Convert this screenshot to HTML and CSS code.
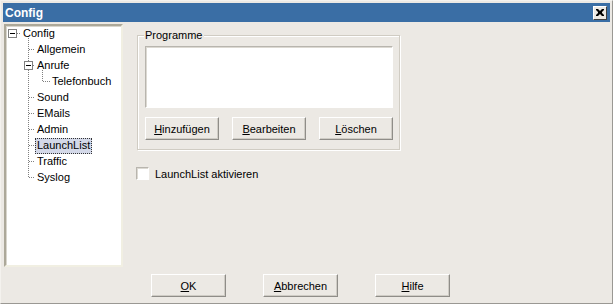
FILE: index.html
```html
<!DOCTYPE html>
<html>
<head>
<meta charset="utf-8">
<link rel="stylesheet" href="styles.css">
</head>
<body>
<div class="window">
  <div class="titlebar">
    <span class="title">Config</span>
    <span class="close"><svg width="8" height="7" viewBox="0 0 8 7"><path d="M0 0h2l2 2 2-2h2v1l-2 2v1l2 2v1h-2l-2-2-2 2h-2v-1l2-2v-1l-2-2z" fill="#000"/></svg></span>
  </div>
  <div class="main">
    <div class="tree">
      <svg class="treelines" width="115" height="160" viewBox="0 0 115 160">
        <g stroke="#808080" stroke-width="1" stroke-dasharray="1 1" fill="none">
          <path d="M11 7.5H15"/>
          <path d="M22.5 12V152"/>
          <path d="M23 23.5H29M27 39.5H29M23 71.5H29M23 87.5H29M23 103.5H29M23 119.5H29M23 135.5H29M23 151.5H29"/>
          <path d="M36.5 44V56"/>
          <path d="M37 55.5H44"/>
        </g>
        <rect x="2.5" y="3.5" width="8" height="8" fill="#fff" stroke="#808080"/>
        <path d="M4 7.5H9" stroke="#000"/>
        <rect x="18.5" y="35.5" width="8" height="8" fill="#fff" stroke="#808080"/>
        <path d="M20 39.5H25" stroke="#000"/>
      </svg>
      <div class="row l0"><span class="label">Config</span></div>
      <div class="row l1"><span class="label">Allgemein</span></div>
      <div class="row l1"><span class="label">Anrufe</span></div>
      <div class="row l2"><span class="label">Telefonbuch</span></div>
      <div class="row l1"><span class="label">Sound</span></div>
      <div class="row l1"><span class="label">EMails</span></div>
      <div class="row l1"><span class="label">Admin</span></div>
      <div class="row l1"><span class="label selected">LaunchList</span></div>
      <div class="row l1"><span class="label">Traffic</span></div>
      <div class="row l1"><span class="label">Syslog</span></div>
    </div>
    <div class="panel">
      <div class="group">
        <span class="legend">Programme</span>
        <div class="listbox"></div>
        <div class="btnrow">
          <button class="btn"><u>H</u>inzufügen</button>
          <button class="btn"><u>B</u>earbeiten</button>
          <button class="btn"><u>L</u>öschen</button>
        </div>
      </div>
      <label class="check"><span class="box"></span><span>LaunchList aktivieren</span></label>
    </div>
  </div>
  <div class="footer">
    <button class="btn"><u>O</u>K</button>
    <button class="btn"><u>A</u>bbrechen</button>
    <button class="btn"><u>H</u>ilfe</button>
  </div>
</div>
</body>
</html>
```
FILE: styles.css
```css
html, body {
  margin: 0;
  padding: 0;
  background: #ece9e4;
}
.window {
  width: 613px;
  height: 304px;
  box-sizing: border-box;
  border: 1px solid;
  border-color: #f4f2ee #9a9893 #9a9893 #f4f2ee;
  padding: 2px;
  background: #ece9e4;
  display: flex;
  flex-direction: column;
  font-family: "Liberation Sans", Arial, sans-serif;
  font-size: 11px;
  color: #000;
}
.titlebar {
  height: 19px;
  background: #3a6ea5;
  display: flex;
  align-items: center;
  justify-content: space-between;
  padding: 0 3px 0 2px;
  flex: none;
}
.title {
  color: #fff;
  font-weight: bold;
  font-size: 12px;
}
.close {
  width: 14px;
  height: 14px;
  box-sizing: border-box;
  background: #ece9e4;
  border: 1px solid;
  border-color: #fff #404040 #404040 #fff;
  display: flex;
  align-items: center;
  justify-content: center;
}
.close svg { display: block; }
.main {
  display: flex;
  margin-top: 2px;
  height: 243px;
  flex: none;
}
.tree {
  position: relative;
  margin-left: 1px;
  width: 119px;
  height: 243px;
  box-sizing: border-box;
  background: #fff;
  border: 2px solid;
  border-color: #aca899 #f1efe2 #f1efe2 #aca899;
  box-shadow: inset 1px 1px #d8d5cc;
}
.treelines {
  position: absolute;
  left: 0;
  top: 0;
}
.row {
  position: relative;
  height: 16px;
}
.l0 { padding-left: 15px; }
.l1 { padding-left: 29px; }
.l2 { padding-left: 44px; }
.label {
  display: inline-block;
  height: 16px;
  box-sizing: border-box;
  line-height: 13px;
  padding: 0 1px 1px 1px;
  border: 1px dotted transparent;
}
.label.selected {
  background: #d3d8e8;
  border-color: #333;
}
.panel {
  padding-left: 14px;
  padding-top: 11px;
}
.group {
  position: relative;
  width: 263px;
  height: 115px;
  box-sizing: border-box;
  border: 1px solid #d0ccc3;
  box-shadow: inset 1px 1px #fff, 1px 1px #fff;
  padding: 10px 6px 0 7px;
}
.legend {
  position: absolute;
  left: 6px;
  top: -7px;
  line-height: 12px;
  padding: 0 2px 0 1px;
  background: #ece9e4;
}
.listbox {
  width: 248px;
  height: 62px;
  box-sizing: border-box;
  background: #fff;
  border: 1px solid;
  border-color: #b8b5ae #fff #fff #b8b5ae;
  box-shadow: inset 1px 1px #dcd9d2;
}
.btnrow {
  display: flex;
  gap: 13px;
  margin-top: 9px;
}
.btn {
  width: 75px;
  height: 23px;
  box-sizing: border-box;
  margin: 0;
  padding: 0;
  background: #ece9e4;
  border: 1px solid;
  border-color: #fff #8f8d88 #8f8d88 #fff;
  box-shadow: inset -1px -1px #cfccc5;
  font-family: "Liberation Sans", Arial, sans-serif;
  font-size: 11px;
  color: #000;
  line-height: 20px;
}
.check {
  display: flex;
  align-items: center;
  margin-top: 17px;
  margin-left: -1px;
  gap: 6px;
}
.box {
  width: 13px;
  height: 13px;
  box-sizing: border-box;
  background: #fff;
  border: 1px solid;
  border-color: #b8b5ae #fff #fff #b8b5ae;
  box-shadow: inset 1px 1px #dcd9d2;
}
.footer {
  display: flex;
  gap: 37px;
  margin-top: 7px;
  padding-left: 148px;
}
```
